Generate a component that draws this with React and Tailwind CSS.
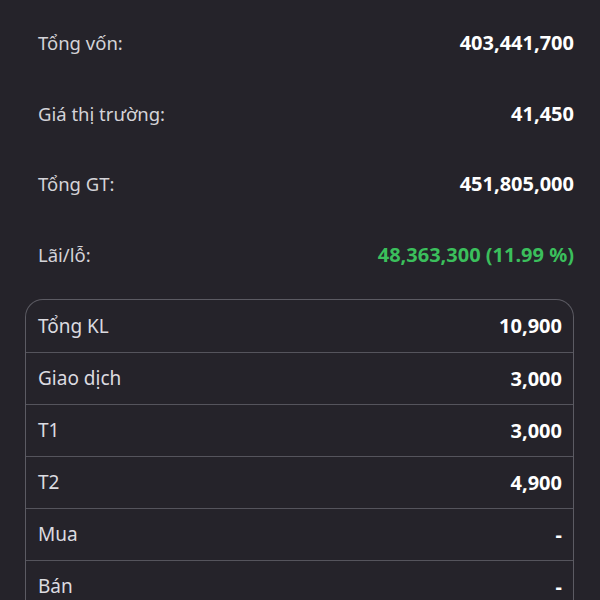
const summary = [
  { label: "Tổng vốn:", value: "403,441,700" },
  { label: "Giá thị trường:", value: "41,450" },
  { label: "Tổng GT:", value: "451,805,000" },
  { label: "Lãi/lỗ:", value: "48,363,300 (11.99 %)", green: true },
];

const volumes = [
  { label: "Tổng KL", value: "10,900" },
  { label: "Giao dịch", value: "3,000" },
  { label: "T1", value: "3,000" },
  { label: "T2", value: "4,900" },
  { label: "Mua", value: "-" },
  { label: "Bán", value: "-" },
];

export default function App() {
  return (
    <div
      className="h-[600px] w-[600px] overflow-hidden bg-[#25232a] pl-[25px] pr-[26px] pt-[8px]"
      style={{ fontFamily: '"Noto Sans", "Open Sans", sans-serif' }}
    >
      {summary.map((row) => (
        <div
          key={row.label}
          className="flex h-[70.5px] items-center justify-between pl-[13px]"
        >
          <span className="text-[18.5px] text-[#d4d3d8]">{row.label}</span>
          <span
            className={
              "text-[20px] font-bold " +
              (row.green ? "text-[#3bbf5c]" : "text-white")
            }
          >
            {row.value}
          </span>
        </div>
      ))}

      <div className="mt-[9px] rounded-t-[18px] border-x-[1.5px] border-t-[1.5px] border-[#5c5b63]">
        {volumes.map((row, i) => (
          <div
            key={row.label}
            className={
              "flex h-[52px] items-center justify-between pl-[12px] pr-[11px] " +
              (i > 0 ? "border-t-[1.5px] border-[#55545c]" : "")
            }
          >
            <span className="text-[19px] text-[#dcdbe0]">{row.label}</span>
            <span className="text-[20px] font-bold text-white">{row.value}</span>
          </div>
        ))}
      </div>
    </div>
  );
}
